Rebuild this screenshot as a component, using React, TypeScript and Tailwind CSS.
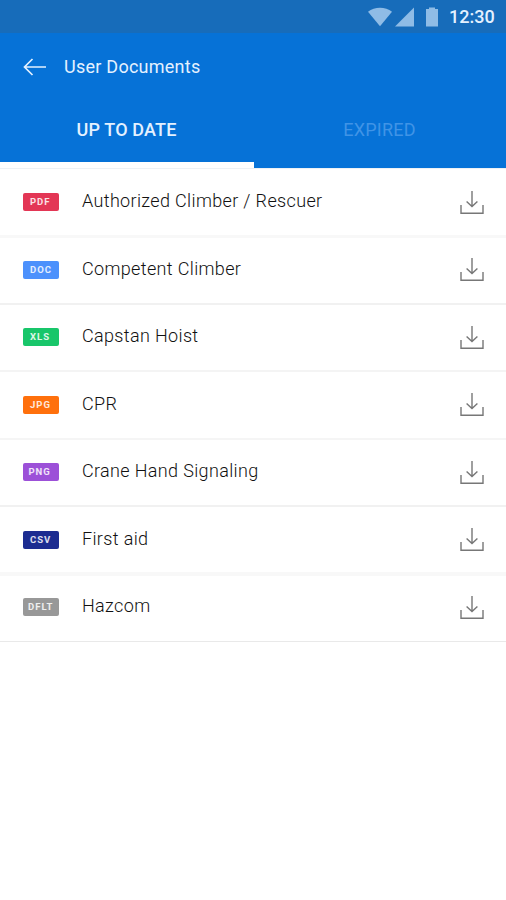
type DocumentItem = {
  type: string;
  title: string;
  color: string;
  badgeText: string;
  row: string;
};

const documents: DocumentItem[] = [
  { type: "PDF", title: "Authorized Climber / Rescuer", color: "bg-[#e33655]", badgeText: "pl-[7px]", row: "h-[69px] pt-5 border-b-3 border-[#f8f8f8]" },
  { type: "DOC", title: "Competent Climber", color: "bg-[#4c91fc]", badgeText: "pl-[7px]", row: "h-[67px] pt-[18.5px] border-b-2 border-[#f1f1f1]" },
  { type: "XLS", title: "Capstan Hoist", color: "bg-[#18c66a]", badgeText: "pl-[7px]", row: "h-[67px] pt-[19px] border-b-2 border-[#f4f4f4]" },
  { type: "JPG", title: "CPR", color: "bg-[#ff700c]", badgeText: "pl-[7px]", row: "h-[68px] pt-[19.5px] border-b-2 border-[#f5f5f5]" },
  { type: "PNG", title: "Crane Hand Signaling", color: "bg-[#9c50d8]", badgeText: "pl-[5.5px]", row: "h-[67px] pt-[19px] border-b-2 border-[#f1f1f1]" },
  { type: "CSV", title: "First aid", color: "bg-[#1c2c91]", badgeText: "pl-[7px]", row: "h-[69px] pt-[19.5px] border-b-4 border-[#f8f8f8]" },
  { type: "DFLT", title: "Hazcom", color: "bg-[#989898]", badgeText: "pl-[5px]", row: "h-[66px] pt-[18px] border-b border-[#e9e9e9]" },
];

function DownloadIcon() {
  return (
    <svg width="26" height="26" viewBox="0 0 26 26" fill="none" stroke="#777777" strokeWidth="1.4">
      <path d="M2 15v8.3h22V15" />
      <path d="M13 1v15.5M7.6 11.4l5.4 5.2 5.4-5.2" />
    </svg>
  );
}

function StatusBar() {
  return (
    <div className="flex h-[33px] items-center bg-[#176cba] pl-[368px] text-[#8fbce6]">
      <svg width="76" height="22" viewBox="0 0 76 22" fill="currentColor">
        <path d="M0 5.7C6.5.4 17.5.4 24 5.7L12 20.3z" />
        <path d="M27 20.5L46 1.5v19z" />
        <path d="M58 3h3V1.5h6V3h3v17.5H58z" />
      </svg>
      <span className="ml-[5px] text-[18px] leading-[33px] font-medium text-[#e4f1ff]">12:30</span>
    </div>
  );
}

export default function App() {
  return (
    <div className="min-h-[900px] w-[506px] bg-white font-[Roboto,sans-serif]">
      <header className="h-[168px] bg-[#0672d7] text-[#e4f1ff]">
        <StatusBar />
        <div className="flex h-[67px] items-center pl-[23px]">
          <button aria-label="Back">
            <svg width="23" height="18" viewBox="0 0 23 18" fill="none" stroke="currentColor" strokeWidth="1.7">
              <path d="M23 9H1.5M9.5 1L1.5 9l8 8" />
            </svg>
          </button>
          <h1 className="ml-[18px] text-[18px] font-normal tracking-[0.25px]">User Documents</h1>
        </div>
        <nav className="grid h-[68px] grid-cols-[254px_252px] text-[18px]">
          <button className="border-b-6 border-white pb-[4px] pr-px font-medium tracking-[0.15px]">UP TO DATE</button>
          <button className="pb-[10px] pr-px tracking-[0.2px] text-[#4094e6]">EXPIRED</button>
        </nav>
      </header>
      <main>
        <ul className="border-t border-[#edf1f5]">
          {documents.map((doc) => (
            <li key={doc.type} className={`flex items-start pr-[21px] pl-[23px] ${doc.row}`}>
              <span className={`mt-[4px] flex h-[18px] w-[36px] items-center rounded-[2px] text-[9.5px] leading-none font-bold tracking-[1px] text-white/85 ${doc.color} ${doc.badgeText}`}>
                {doc.type}
              </span>
              <span className="ml-[23px] flex-1 text-[18px] leading-6 font-light tracking-[0.35px] text-[#111111]">{doc.title}</span>
              <button aria-label={`Download ${doc.title}`} className="mt-[0.5px]">
                <DownloadIcon />
              </button>
            </li>
          ))}
        </ul>
      </main>
    </div>
  );
}
